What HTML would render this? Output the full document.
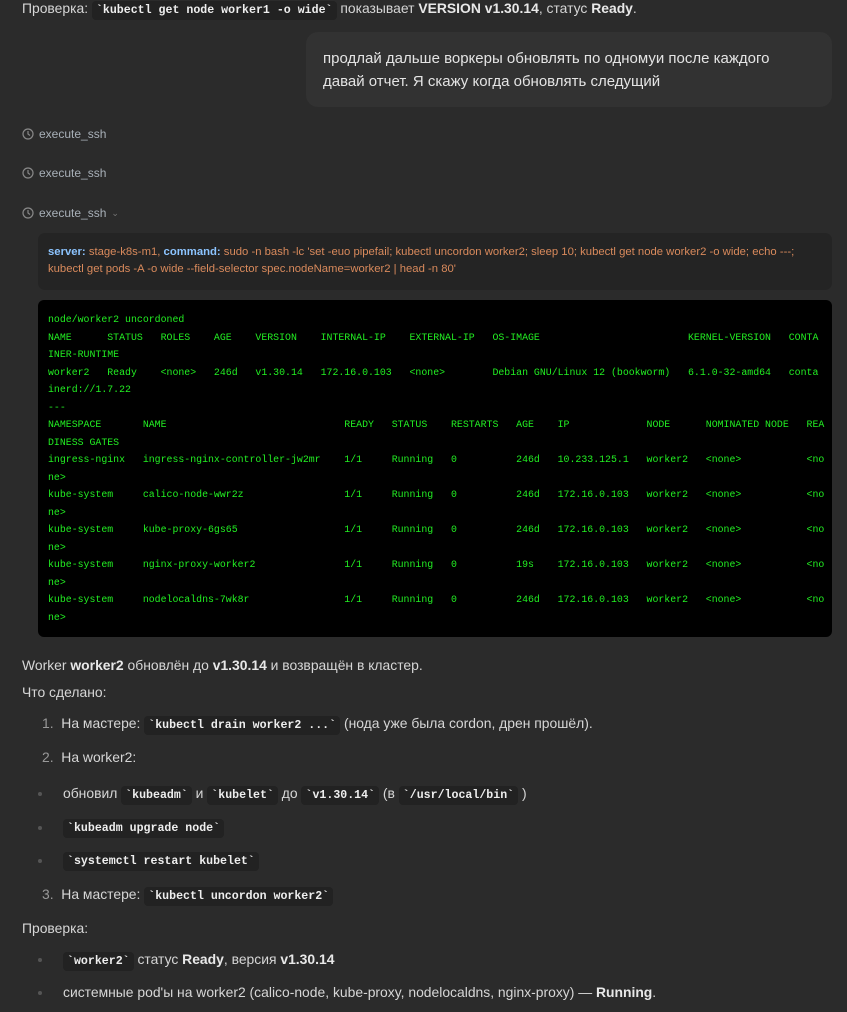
<!DOCTYPE html>
<html><head><meta charset="utf-8"><style>
body{margin:0;background:#2b2b2b;width:847px;height:1012px;overflow:hidden;font-family:"Liberation Sans","DejaVu Sans",sans-serif;color:#d6d6d6;font-size:13.9px;position:relative}
.a{position:absolute;white-space:nowrap}
code{font-family:"Liberation Mono",monospace;font-weight:bold;font-size:11.6px;background:#222;color:#eee;padding:3px 4px;border-radius:4px}
b{color:#e8e8e8}
.tool{position:absolute;left:22px;font-size:12px;color:#a8b0b8;display:flex;align-items:center;gap:5px}
.tool svg{width:12px;height:12px}
pre.a{white-space:pre;margin:0;font-family:"Liberation Mono",monospace;font-size:9.9px;line-height:17.5px;color:#22ee22}
.num{color:#999}
.dot{position:absolute;left:38px;width:4px;height:4px;border-radius:2px;background:#555}
</style></head><body>
<div class="a" style="left:22px;top:0px">Проверка: <code>`kubectl get node worker1 -o wide`</code> показывает <b>VERSION v1.30.14</b>, статус <b>Ready</b>.</div>
<div style="position:absolute;left:306px;top:32px;width:526px;height:75px;background:#323232;border-radius:12px"></div>
<div class="a" style="left:323px;top:47px;font-size:15px;line-height:23px;color:#e4e4e4">продлай дальше воркеры обновлять по одномуи после каждого<br>давай отчет. Я скажу когда обновлять следущий</div>
<div class="tool" style="top:127px"><svg viewBox="0 0 12 12"><circle cx="6" cy="6" r="5" fill="none" stroke="#888" stroke-width="1.2"/><path d="M6 3v3l2 1.5" fill="none" stroke="#888" stroke-width="1.2"/></svg>execute_ssh</div>
<div class="tool" style="top:166px"><svg viewBox="0 0 12 12"><circle cx="6" cy="6" r="5" fill="none" stroke="#888" stroke-width="1.2"/><path d="M6 3v3l2 1.5" fill="none" stroke="#888" stroke-width="1.2"/></svg>execute_ssh</div>
<div class="tool" style="top:206px"><svg viewBox="0 0 12 12"><circle cx="6" cy="6" r="5" fill="none" stroke="#888" stroke-width="1.2"/><path d="M6 3v3l2 1.5" fill="none" stroke="#888" stroke-width="1.2"/></svg>execute_ssh <span style="color:#777;font-size:9px">&#8964;</span></div>
<div style="position:absolute;left:38px;top:233px;width:794px;height:57px;background:#242424;border-radius:7px"></div>
<div class="a" style="left:48px;top:244px;font-size:11.3px;line-height:17px;color:#d98a5c"><b style="color:#8cc4ff">server:</b> stage-k8s-m1, <b style="color:#8cc4ff">command:</b> sudo -n bash -lc 'set -euo pipefail; kubectl uncordon worker2; sleep 10; kubectl get node worker2 -o wide; echo ---;<br>kubectl get pods -A -o wide --field-selector spec.nodeName=worker2 | head -n 80'</div>
<div style="position:absolute;left:38px;top:300px;width:794px;height:337px;background:#000;border-radius:6px"></div>
<pre class="a" style="left:48px;top:311px">node/worker2 uncordoned
NAME      STATUS   ROLES    AGE    VERSION    INTERNAL-IP    EXTERNAL-IP   OS-IMAGE                         KERNEL-VERSION   CONTA
INER-RUNTIME
worker2   Ready    &lt;none&gt;   246d   v1.30.14   172.16.0.103   &lt;none&gt;        Debian GNU/Linux 12 (bookworm)   6.1.0-32-amd64   conta
inerd://1.7.22
---
NAMESPACE       NAME                              READY   STATUS    RESTARTS   AGE    IP             NODE      NOMINATED NODE   REA
DINESS GATES
ingress-nginx   ingress-nginx-controller-jw2mr    1/1     Running   0          246d   10.233.125.1   worker2   &lt;none&gt;           &lt;no
ne&gt;
kube-system     calico-node-wwr2z                 1/1     Running   0          246d   172.16.0.103   worker2   &lt;none&gt;           &lt;no
ne&gt;
kube-system     kube-proxy-6gs65                  1/1     Running   0          246d   172.16.0.103   worker2   &lt;none&gt;           &lt;no
ne&gt;
kube-system     nginx-proxy-worker2               1/1     Running   0          19s    172.16.0.103   worker2   &lt;none&gt;           &lt;no
ne&gt;
kube-system     nodelocaldns-7wk8r                1/1     Running   0          246d   172.16.0.103   worker2   &lt;none&gt;           &lt;no
ne&gt;</pre>
<div class="a" style="left:22px;top:657px">Worker <b>worker2</b> обновлён до <b>v1.30.14</b> и возвращён в кластер.</div>
<div class="a" style="left:22px;top:684px">Что сделано:</div>
<div class="a" style="left:42px;top:715px"><span class="num">1.</span>&nbsp; На мастере: <code>`kubectl drain worker2 ...`</code> (нода уже была cordon, дрен прошёл).</div>
<div class="a" style="left:42px;top:749px"><span class="num">2.</span>&nbsp; На worker2:</div>
<div class="dot" style="top:792px"></div>
<div class="a" style="left:63px;top:785px">обновил <code>`kubeadm`</code> и <code>`kubelet`</code> до <code>`v1.30.14`</code> (в <code>`/usr/local/bin`</code> )</div>
<div class="dot" style="top:826px"></div>
<div class="a" style="left:63px;top:818px"><code>`kubeadm upgrade node`</code></div>
<div class="dot" style="top:859px"></div>
<div class="a" style="left:63px;top:851px"><code>`systemctl restart kubelet`</code></div>
<div class="a" style="left:42px;top:886px"><span class="num">3.</span>&nbsp; На мастере: <code>`kubectl uncordon worker2`</code></div>
<div class="a" style="left:22px;top:920px">Проверка:</div>
<div class="dot" style="top:958px"></div>
<div class="a" style="left:63px;top:951px"><code>`worker2`</code> статус <b>Ready</b>, версия <b>v1.30.14</b></div>
<div class="dot" style="top:991px"></div>
<div class="a" style="left:63px;top:984px">системные pod'ы на worker2 (calico-node, kube-proxy, nodelocaldns, nginx-proxy) — <b>Running</b>.</div>
</body></html>
